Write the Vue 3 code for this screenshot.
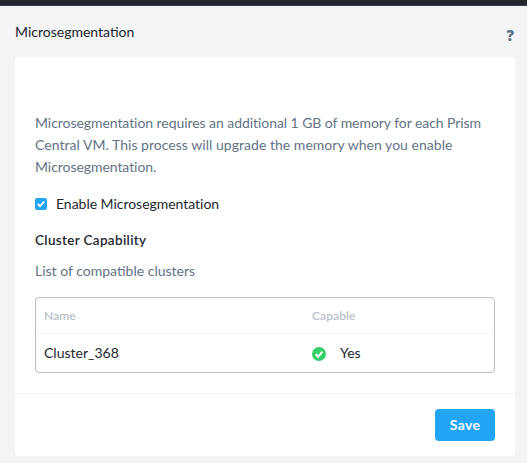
<script setup>
const message = [
  { text: 'Microsegmentation requires an additional 1 GB of memory for each Prism', cls: 'line-a' },
  { text: 'Central VM. This process will upgrade the memory when you enable', cls: 'line-b' },
  { text: 'Microsegmentation.', cls: 'line-c' },
]
const clusters = [{ name: 'Cluster_368', capable: 'Yes' }]
</script>

<template>
  <div class="page">
    <div class="topbar"></div>
    <header class="header">
      <h1 class="title"><span>Microsegmentation</span></h1>
      <span class="help">?</span>
    </header>
    <main class="card">
      <section class="content">
        <p class="message">
          <span v-for="line in message" :key="line.cls" class="line" :class="line.cls">{{ line.text }}</span>
        </p>
        <div class="option">
          <svg class="checkbox" viewBox="0 0 12 12">
            <rect width="12" height="12" rx="2" fill="#22a5f7" />
            <path d="M2.9 6 5 8.1 9.2 3.7" fill="none" stroke="#fff" stroke-width="1.8" />
          </svg>
          <span class="option-label">Enable Microsegmentation</span>
        </div>
        <h2 class="subtitle"><span>Cluster Capability</span></h2>
        <p class="caption"><span>List of compatible clusters</span></p>
        <div class="table">
          <div class="row head">
            <span class="col-name">Name</span>
            <span class="col-capable">Capable</span>
          </div>
          <div v-for="c in clusters" :key="c.name" class="row body">
            <span class="col-name">{{ c.name }}</span>
            <div class="status">
              <svg class="ok" viewBox="0 0 14 14">
                <circle cx="7" cy="7" r="7" fill="#36d068" />
                <path d="M3.6 7.2 6.1 9.7 10.5 4.6" fill="none" stroke="#fff" stroke-width="2" />
              </svg>
              <span class="yes">{{ c.capable }}</span>
            </div>
          </div>
        </div>
      </section>
      <footer class="footer">
        <button class="save" type="button">Save</button>
      </footer>
    </main>
  </div>
</template>

<style>
body {
  background: #f2f4f6;
  overflow: hidden;
}
</style>

<style scoped>
.page {
  box-sizing: border-box;
  width: 527px;
  height: 463px;
  background: #f2f4f6;
  font-family: Lato, sans-serif;
  font-size: 14px;
  color: #22272e;
}
.topbar {
  box-sizing: border-box;
  height: 6px;
  background: #22272e;
  border-bottom: 1px solid #3b3d48;
}
.header {
  box-sizing: border-box;
  height: 51px;
  padding: 15px 13px 0 15px;
  display: flex;
  justify-content: space-between;
  align-items: flex-start;
}
h1, h2, p {
  margin: 0;
  font-size: 14px;
  font-weight: 400;
}
.title {
  line-height: 22px;
}
.help {
  margin-top: 6px;
  line-height: 16px;
  font-family: "Open Sans", sans-serif;
  font-size: 15px;
  font-weight: 800;
  color: #627386;
}
.card {
  box-sizing: border-box;
  width: 500px;
  height: 399px;
  margin-left: 15px;
  background: #fff;
  border-radius: 4px;
}
.content {
  box-sizing: border-box;
  height: 336px;
  padding: 55px 20px 0;
}
.message {
  color: #627386;
}
.line {
  display: block;
  line-height: 22px;
  white-space: nowrap;
}
.line-a {
  letter-spacing: -0.06px;
}
.line-b {
  letter-spacing: 0.03px;
}
.line-c {
  letter-spacing: -0.06px;
}
.option {
  display: flex;
  align-items: center;
  height: 22px;
  margin-top: 15px;
}
.checkbox {
  width: 12px;
  height: 12px;
  margin-right: 9px;
}
.option-label {
  padding-bottom: 2px;
  letter-spacing: -0.03px;
}
.subtitle {
  margin-top: 14px;
  line-height: 22px;
  font-size: 13.5px;
  font-weight: 600;
  letter-spacing: 0.33px;
}
.caption {
  margin-top: 9px;
  line-height: 22px;
  color: #627386;
}
.table {
  box-sizing: border-box;
  height: 76px;
  margin-top: 15px;
  border: 1px solid #b8bfca;
  border-radius: 4px;
}
.row {
  box-sizing: border-box;
  display: grid;
  grid-template-columns: 268px 1fr;
  align-items: center;
  padding-left: 8px;
}
.head {
  height: 36px;
  padding-bottom: 1px;
  border-bottom: 1px solid #f2f4f6;
  color: #b8bfca;
  font-size: 12px;
  font-weight: 600;
  letter-spacing: 0.1px;
}
.body {
  height: 38px;
}
.body .col-name,
.yes {
  padding-bottom: 1px;
}
.status {
  display: flex;
  align-items: center;
}
.ok {
  width: 14px;
  height: 14px;
  margin: 2px 14px 0 0;
}
.footer {
  box-sizing: border-box;
  height: 63px;
  padding: 15px 20px 0;
  border-top: 1px solid #f2f4f6;
  display: flex;
  justify-content: flex-end;
}
.save {
  width: 60px;
  height: 32px;
  padding: 0 0 1px;
  border: 0;
  border-radius: 4px;
  background: #22a5f7;
  color: #fff;
  font-family: inherit;
  font-size: 14px;
  font-weight: 700;
  letter-spacing: 0.3px;
}
</style>
